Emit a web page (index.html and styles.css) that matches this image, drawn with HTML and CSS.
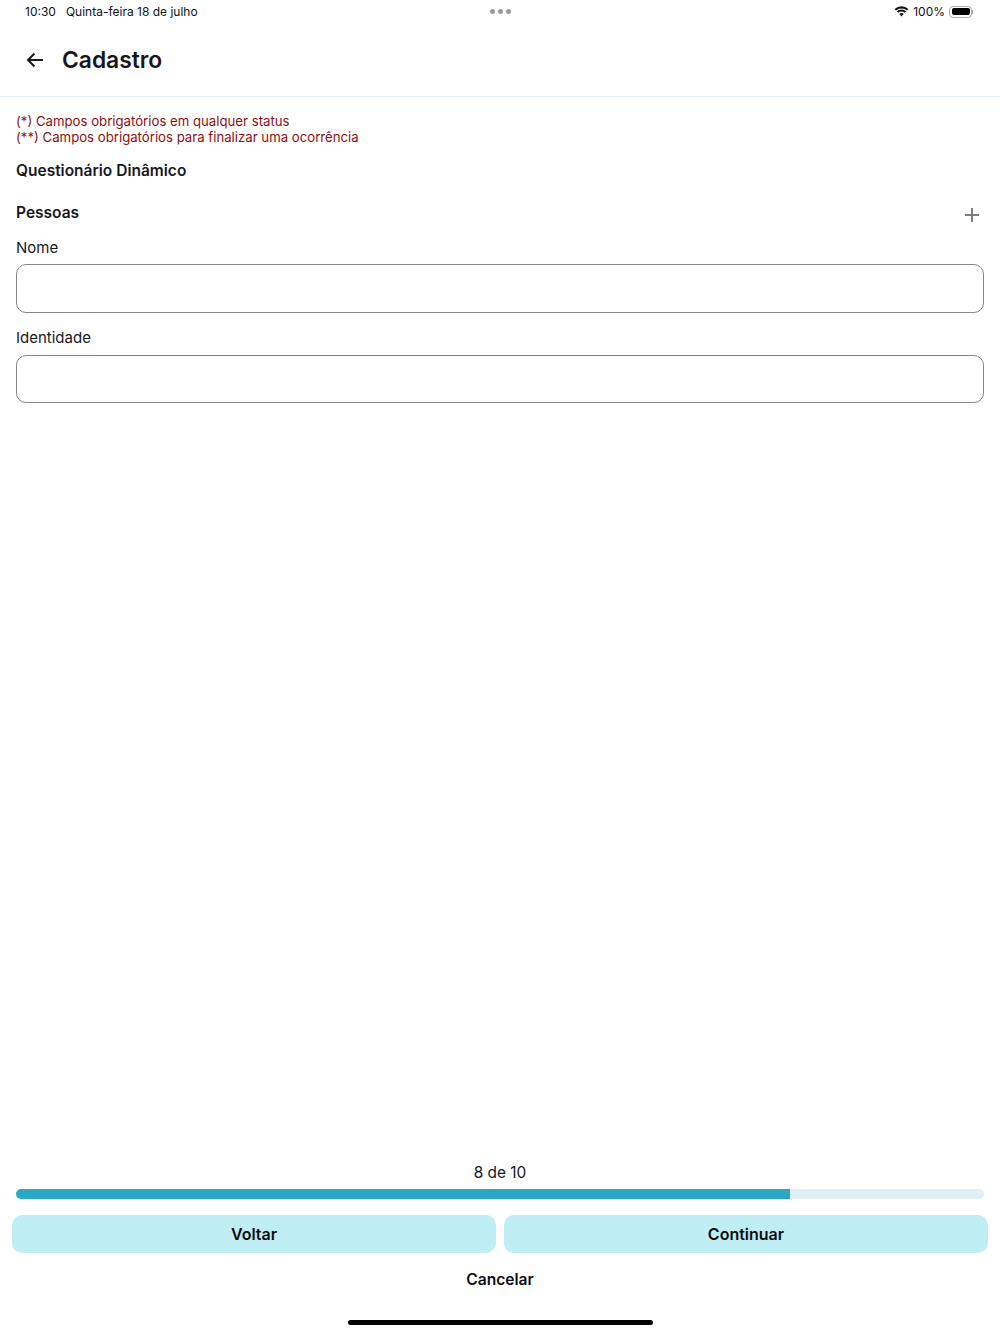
FILE: index.html
```html
<!DOCTYPE html>
<html lang="pt-BR">
<head>
    <meta charset="UTF-8">
    <meta name="viewport" content="width=device-width, initial-scale=1.0">
    <title>Cadastro</title>
    <link rel="stylesheet" href="styles.css">
</head>
<body>
<div class="page">
    <div class="status-bar">
        <div class="status-left">
            <span>10:30</span>
            <span>Quinta-feira 18 de julho</span>
        </div>
        <div class="status-dots">
            <span class="dot"></span>
            <span class="dot"></span>
            <span class="dot"></span>
        </div>
        <div class="status-right">
            <svg class="wifi" width="15" height="11" viewBox="0 0 15 11">
                <path d="M7.5 2.4c2.1 0 4 .8 5.5 2.2l1.4-1.5A10 10 0 0 0 7.5.3 10 10 0 0 0 .6 3.1L2 4.6a7.9 7.9 0 0 1 5.5-2.2z" fill="#111"/>
                <path d="M7.5 5.6c1.2 0 2.3.4 3.2 1.2l1.4-1.5a6.7 6.7 0 0 0-9.2 0l1.4 1.5c.9-.8 2-1.2 3.2-1.2z" fill="#111"/>
                <path d="M7.5 7.1c-.9 0-1.6.3-2.2.9l2.2 2.5L9.7 8c-.6-.6-1.3-.9-2.2-.9z" fill="#111"/>
            </svg>
            <span>100%</span>
            <div class="battery">
                <div class="battery-fill"></div>
            </div>
            <div class="battery-tip"></div>
        </div>
    </div>

    <div class="header">
        <svg class="back" width="20" height="18" viewBox="0 0 20 18">
            <path d="M18 9H3M9.5 2.5 3 9l6.5 6.5" fill="none" stroke="#16181d" stroke-width="2"/>
        </svg>
        <h1>Cadastro</h1>
    </div>

    <div class="content">
        <div class="notes">
            <div>(*) Campos obrigatórios em qualquer status</div>
            <div>(**) Campos obrigatórios para finalizar uma ocorrência</div>
        </div>
        <div class="section-title">Questionário Dinâmico</div>
        <div class="group-row">
            <span class="group-title">Pessoas</span>
            <svg class="plus" width="14" height="14" viewBox="0 0 14 14">
                <path d="M7 0v14M0 7h14" stroke="#7b7d82" stroke-width="2"/>
            </svg>
        </div>
        <div class="field">
            <label class="field-label">Nome</label>
            <div class="field-input"></div>
        </div>
        <div class="field">
            <label class="field-label">Identidade</label>
            <div class="field-input"></div>
        </div>
    </div>

    <div class="footer">
        <div class="progress-text">8 de 10</div>
        <div class="progress">
            <div class="progress-fill" style="width: 80%"></div>
        </div>
        <div class="buttons">
            <button class="btn">Voltar</button>
            <button class="btn">Continuar</button>
        </div>
        <div class="cancel">Cancelar</div>
        <div class="home-bar"></div>
    </div>
</div>
</body>
</html>
```

FILE: styles.css
```css
* {
    box-sizing: border-box;
}

body {
    font-family: 'Inter', 'Liberation Sans', sans-serif;
    background-color: #fff;
    color: #16181d;
    margin: 0;
    padding: 0;
}

.page {
    height: 1333px;
    display: flex;
    flex-direction: column;
    overflow: hidden;
}

.status-bar {
    height: 23px;
    padding: 0 27px 0 25px;
    display: flex;
    align-items: center;
    justify-content: space-between;
    position: relative;
    font-size: 12px;
    color: #111;
}

.status-left {
    display: flex;
    gap: 10px;
}

.status-dots {
    position: absolute;
    left: 490px;
    top: 9px;
    display: flex;
    gap: 3px;
}

.dot {
    width: 5px;
    height: 5px;
    border-radius: 50%;
    background-color: #9a9a9c;
}

.status-right {
    display: flex;
    align-items: center;
    gap: 5px;
}

.status-right .wifi {
    margin-right: -1px;
}

.battery {
    width: 23px;
    height: 12px;
    margin-left: -1px;
    padding: 1.5px;
    border: 1px solid #a9a9ab;
    border-radius: 4px;
}

.battery-fill {
    height: 100%;
    background-color: #000;
    border-radius: 2px;
}

.battery-tip {
    width: 1px;
    height: 4px;
    margin-left: -5px;
    background-color: #a9a9ab;
}

.header {
    height: 74px;
    padding-left: 25px;
    display: flex;
    align-items: center;
    gap: 17px;
    border-bottom: 1px solid #e3eef7;
}

.header h1 {
    margin: 0;
    font-size: 22.8px;
    font-weight: 600;
    line-height: 30px;
}

.content {
    flex: 1;
    padding: 16px 16px 0;
}

.notes {
    font-size: 13.2px;
    line-height: 16px;
    color: #8b1010;
}

.section-title {
    margin-top: 16px;
    font-size: 15.5px;
    font-weight: 600;
    line-height: 20px;
}

.group-row {
    margin-top: 22px;
    margin-bottom: 15px;
    display: flex;
    justify-content: space-between;
    align-items: flex-start;
    padding-right: 5px;
}

.group-title {
    font-size: 15.5px;
    font-weight: 600;
    line-height: 20px;
}

.plus {
    margin-top: 5px;
}

.field {
    margin-bottom: 15.6px;
}

.field-label {
    display: block;
    font-size: 15px;
    line-height: 20px;
    margin-top: 4px;
    margin-bottom: 6.4px;
}

.field-input {
    height: 48.4px;
    border: 1px solid #85878c;
    border-radius: 10px;
    background-color: #fff;
}

.footer {
    display: flex;
    flex-direction: column;
    align-items: center;
}

.progress-text {
    font-size: 15.4px;
    line-height: 20px;
    margin-bottom: 6px;
}

.progress {
    width: 968px;
    height: 10px;
    background-color: #e3eff6;
    border-radius: 5px;
    overflow: hidden;
}

.progress-fill {
    height: 100%;
    background-color: #2ba8c2;
}

.buttons {
    width: 976px;
    margin-top: 16px;
    display: flex;
    gap: 8px;
}

.btn {
    flex: 1;
    height: 38px;
    border: none;
    border-radius: 10px;
    background-color: #c0eef5;
    color: #0b0d10;
    font-family: inherit;
    font-size: 16px;
    font-weight: 600;
}

.cancel {
    margin-top: 17px;
    font-size: 15.6px;
    font-weight: 600;
    line-height: 20px;
    color: #0b0d10;
}

.home-bar {
    width: 305px;
    height: 5px;
    margin-top: 30px;
    margin-bottom: 8px;
    background-color: #000;
    border-radius: 3px;
}
```
